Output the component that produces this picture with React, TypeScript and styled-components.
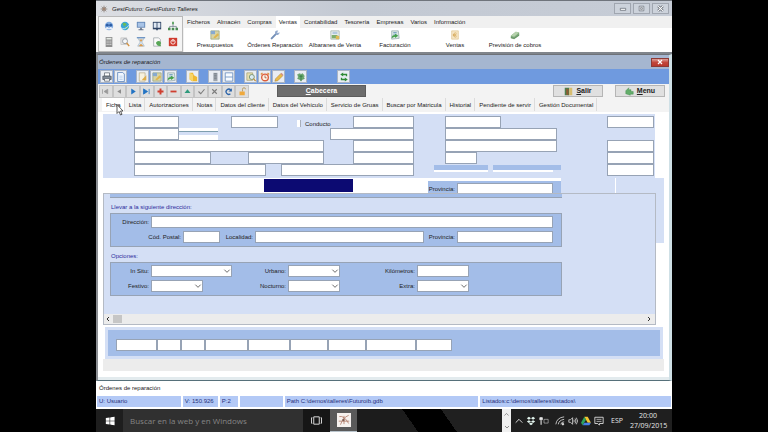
import React from "react";
import styled, { createGlobalStyle, css } from "styled-components";

const SANS = '"Liberation Sans", Arial, sans-serif';
const SHELL = '"Open Sans", "Noto Sans", sans-serif';

const color = {
  pale: "#d4dff5",
  mid: "#a3bde8",
  toolbar: "#6f9adf",
  line: "#97a3b5",
  status: "#b3c9f6",
  navy: "#0c0a72",
  label: "#2c2c9c",
};

const GlobalStyle = createGlobalStyle`
  *, *::before, *::after { box-sizing: border-box; }
  body { margin: 0; background: #000; font-family: ${SANS}; font-size: 6px; line-height: 8px; color: #222; }
  button, input, select { font: inherit; color: inherit; margin: 0; padding: 0; border-radius: 0; }
  svg { display: block; flex: none; }
`;

/* ---------- window ---------- */

const Desktop = styled.div`
  display: flex;
  justify-content: center;
  min-height: 100vh;
  background: #000;
`;
const AppWindow = styled.div`
  display: flex;
  flex-direction: column;
  width: 75%;
  background: #fff;
`;
const TitleBar = styled.header`
  display: flex;
  align-items: center;
  gap: 4px;
  height: 16px;
  padding: 0 3px 0 4px;
  border-top: 1px solid #6f747c;
  background: linear-gradient(90deg, #dcdee3 0%, #c3c9d3 45%, #c6ccd6 100%);
`;
const Title = styled.h1`
  flex: 1;
  margin: 0;
  font-size: 6px;
  font-weight: 400;
  font-style: italic;
`;
const WindowButtons = styled.div`
  display: flex;
  gap: 2px;
`;
const WindowButton = styled.button`
  display: grid;
  place-items: center;
  width: 17px;
  height: 11px;
  border: 1px solid #a0a6b0;
  background: #ccd2db;
  color: #555c66;
`;

/* ---------- ribbon ---------- */

const Ribbon = styled.div`
  display: flex;
  height: 38px;
  padding-left: 2px;
  border-bottom: 2px solid #80858c;
  background: #f0f0f0;
`;
const QuickPanel = styled.div`
  display: grid;
  grid-template-columns: repeat(5, 16px);
  place-content: center;
  width: 85px;
  border: 1px solid #b9b9b9;
  background: #f4f4f4;
`;
const IconButton = styled.button`
  display: grid;
  place-items: center;
  height: 16px;
  border: 0;
  background: none;
`;
const RibbonMain = styled.div`
  display: flex;
  flex: 1;
  flex-direction: column;
  margin-left: 1px;
`;
const Menu = styled.nav`
  display: flex;
  gap: 1px;
  height: 12px;
`;
const MenuTab = styled.button<{ $active?: boolean }>`
  padding: 0 3px;
  border: 0;
  background: ${(p) => (p.$active ? "#fff" : "none")};
  white-space: nowrap;
`;
const RibbonItems = styled.div`
  display: grid;
  grid-template-columns: repeat(6, 60px);
  flex: 1;
  padding-left: 1px;
  background: #fff;
`;
const RibbonItem = styled.button`
  display: flex;
  flex-direction: column;
  align-items: center;
  gap: 1px;
  padding-top: 2px;
  border: 0;
  background: none;
  white-space: nowrap;
`;

/* ---------- child window ---------- */

const Child = styled.section`
  display: flex;
  flex-direction: column;
  border: solid #6e7278;
  border-width: 1px 3px 1px 2px;
  border-left-color: #8b8e93;
  border-right-color: #cfe0e6;
  border-bottom-color: #56707a;
  background: #fff;
`;
const ChildTitle = styled.div`
  display: flex;
  align-items: center;
  justify-content: space-between;
  height: 14px;
  padding-left: 1px;
  background: #a5b6d0;
`;
const ChildHeading = styled.h2`
  margin: 0;
  font-size: 6px;
  font-weight: 400;
  font-style: italic;
`;
const CloseButton = styled.button`
  display: grid;
  place-items: center;
  width: 18px;
  height: 9px;
  border: 1px solid #8d3a35;
  background: linear-gradient(#dda09a, #c2463b 50%, #b8392e);
  color: #fff;
`;
const Toolbar = styled.div`
  display: flex;
  align-items: center;
  gap: 9px;
  height: 15px;
  padding-left: 2px;
  background: ${color.toolbar};
`;
const ToolGroup = styled.div<{ $apart?: boolean }>`
  display: flex;
  gap: 1px;
  margin-left: ${(p) => (p.$apart ? 21 : 0)}px;
`;
const ToolButton = styled.button`
  display: grid;
  place-items: center;
  width: 13px;
  height: 13px;
  border: 1px solid #aab4c4;
  background: #e9edf3;
`;
const NavBar = styled.div`
  display: flex;
  align-items: center;
  height: 14px;
  padding: 0 4px 0 1px;
  background: #f3f3f3;
`;
const NavButtons = styled.div`
  display: grid;
  grid-template-columns: repeat(11, 1fr);
  width: 150px;
`;
const NavButton = styled.button`
  display: grid;
  place-items: center;
  height: 13px;
  border: 1px solid #c4c4c4;
  background: #dedede;
`;
const HeaderButton = styled.button`
  width: 89px;
  height: 12px;
  margin: 0 auto 0 28px;
  border: 1px solid #5c5c5c;
  background: #6d6d6d;
  color: #fff;
  font-size: 7px;
  font-weight: 700;
`;
const ActionButton = styled.button`
  display: flex;
  align-items: center;
  justify-content: center;
  gap: 3px;
  width: 50px;
  height: 12px;
  margin-left: 12px;
  border: 1px solid #b5b5b5;
  background: #e0e0e0;
  font-size: 7px;
  font-weight: 700;
`;
const Tabs = styled.nav`
  display: flex;
  height: 14px;
  padding: 0 0 1px 4px;
  background: #f3f3f3;
`;
const Tab = styled.button<{ $active?: boolean }>`
  position: relative;
  padding: 0 3px 0 4px;
  border: 0;
  border-right: 1px solid #dcdcdc;
  background: ${(p) => (p.$active ? "#fff" : "none")};
  white-space: nowrap;
`;
const Pointer = styled.svg`
  position: absolute;
  z-index: 2;
  top: 6px;
  left: 14px;
`;

/* ---------- form ---------- */

const Body = styled.div`
  display: flex;
  flex-direction: column;
  padding: 2px 5px 6px;
  border-bottom: 3px solid #e3ebee;
`;
const Cells = styled.div<{ $cols: string; $height?: number }>`
  display: grid;
  grid-template-columns: ${(p) =>
    p.$cols
      .split(" ")
      .map((n) => `minmax(0, ${n}fr)`)
      .join(" ")};
  height: ${(p) => (p.$height ? `${p.$height}px` : "auto")};
`;
const UpperPanel = styled.div`
  margin-right: 9px;
  padding: 2px 0;
  background: ${color.pale};
`;
const fieldLook = css`
  width: 100%;
  min-width: 0;
  height: 12px;
  border: 1px solid ${color.line};
  background: #fff;
`;
const Field = styled.input`
  ${fieldLook}
`;
const Check = styled.input`
  appearance: none;
  width: 4px;
  height: 7px;
  margin-top: 4px;
  border: solid #a8afbb;
  border-width: 0 1px 0 0;
  background: #fff;
`;
const CheckLabel = styled.label`
  padding-top: 4px;
`;
const Strips = styled.div`
  display: grid;
  grid-template-rows: 3px 1px 3px 5px;
  height: 12px;
`;
const Strip = styled.div<{ $tone?: "white" | "mid" | "edge" | "pale" }>`
  background: ${(p) =>
    ({ white: "#fff", mid: color.mid, edge: "#7f9fae", pale: color.pale, none: "none" })[p.$tone ?? "none"]};
`;
const RemnantStrips = styled.div`
  display: grid;
  grid-template-rows: 5px 2px;
  padding-top: 1px;
`;
const BandBlock = styled.div`
  display: grid;
  grid-template-columns: minmax(0, 29fr) minmax(0, 96fr) minmax(0, 8fr);
  height: 12px;
  margin-top: 3px;
  padding-top: 2px;
  background: ${color.mid};
`;
const Marker = styled.div`
  height: 13px;
  margin-top: 1px;
  background: ${color.navy};
`;
const ScrollPanel = styled.div`
  border: 1px solid #b4bac4;
  background: ${color.pale};
`;
const TopRemnant = styled.div`
  height: 4px;
  border-bottom: 1px solid ${color.line};
  background: ${color.mid};
`;
const SideStrip = styled.div`
  height: 50px;
  background: ${color.pale};
`;
const GroupTitle = styled.h3`
  margin: 5px 0 2px;
  padding-left: 1px;
  color: ${color.label};
  font-size: 6px;
  font-weight: 400;
  line-height: 8px;
`;
const Group = styled.div`
  display: grid;
  gap: 3px;
  padding: 2px 0 3px;
  border: 1px solid ${color.line};
  background: ${color.mid};
`;
const Label = styled.label`
  padding-right: 2px;
  line-height: 12px;
  text-align: right;
  white-space: nowrap;
`;
const SelectBox = styled.span`
  display: grid;
  align-items: center;
  > * {
    grid-area: 1 / 1;
  }
  > svg {
    justify-self: end;
    margin-right: 1px;
    pointer-events: none;
  }
`;
const Select = styled.select`
  ${fieldLook}
  appearance: none;
`;
const ScrollTrack = styled.div`
  display: flex;
  align-items: center;
  justify-content: space-between;
  height: 10px;
  margin-top: 18px;
  padding: 0 3px 0 1px;
  background: #ececec;
`;
const ScrollStart = styled.div`
  display: flex;
  align-items: center;
  gap: 2px;
`;
const Thumb = styled.div`
  width: 9px;
  height: 8px;
  background: #c6c6c6;
`;
const Totals = styled.div`
  margin: 2px 1px 0 2px;
  padding: 3px;
  background: ${color.pale};
`;
const TotalsInner = styled.div`
  padding: 9px 0 5px;
  background: ${color.mid};
`;
const Filler = styled.div`
  height: 12px;
  background: #ececec;
`;

/* ---------- status bars ---------- */

const HintBar = styled.div`
  height: 14px;
  padding-left: 3px;
  line-height: 14px;
`;
const StatusBar = styled.footer`
  display: grid;
  grid-template-columns: 84fr 35fr 18fr 43fr 194fr 191fr;
  gap: 2px;
  padding: 1px 1px 2px;
`;
const StatusCell = styled.div`
  padding: 0 2px;
  background: ${color.status};
  color: #26307a;
  line-height: 11px;
  white-space: nowrap;
`;
const Taskbar = styled.div`
  display: flex;
  align-items: stretch;
  flex: 1;
  min-height: 23px;
  background: #161616;
  color: #e8e8e8;
  font-family: ${SHELL};
`;
const StartButton = styled.button`
  display: grid;
  place-items: center;
  width: 27px;
  border: 0;
  background: #1e1e1e;
`;
const Search = styled.input`
  width: 180px;
  padding: 0 7px;
  border: 0;
  background: #303030;
  font-size: 8px;
  &::placeholder {
    color: #858585;
    opacity: 1;
  }
`;
const TaskButton = styled.button<{ $active?: boolean }>`
  display: grid;
  place-items: center;
  width: 27px;
  border: 0;
  border-bottom: 1px solid ${(p) => (p.$active ? "#b9c4cc" : "transparent")};
  background: ${(p) => (p.$active ? "#5a5a5a" : "none")};
  color: #e8e8e8;
`;
const Wallpaper = styled.div`
  flex: 1;
  background: linear-gradient(55deg, #1c1c1c 38%, #000 38% 62%, #202020 62%);
`;
const Spinner = styled.div`
  display: flex;
  flex-direction: column;
  align-items: center;
  justify-content: space-between;
  width: 9px;
  padding: 3px 0 2px;
  background: #f0f0f0;
  color: #555;
`;
const Tray = styled.div`
  display: flex;
  align-items: center;
  gap: 3px;
  padding: 0 6px 0 4px;
  background: #1f1f1f;
  font-size: 7px;
`;
const Language = styled.span`
  width: 20px;
  text-align: center;
`;
const Clock = styled.time`
  width: 36px;
  font-size: 7px;
  line-height: 10px;
  text-align: center;
`;

/* ---------- icons ---------- */

const drawings = {
  gear: (
    <g stroke="#8d8078" strokeWidth="1.2" fill="none">
      <path d="M6 1v10M1 6h10M2.500 2.500l7 7M9.500 2.500l-7 7" />
      <circle cx="6" cy="6" r="2" fill="#b58a70" />
    </g>
  ),
  users: (
    <g>
      <circle cx="6" cy="6" r="5" fill="#7fa9de" />
      <circle cx="4" cy="5" r="1.700" fill="#2d5da5" />
      <circle cx="8" cy="5" r="1.700" fill="#2d5da5" />
      <path d="M1 10q3-5 5-1q2-4 5 1z" fill="#e6eefb" />
    </g>
  ),
  globe: (
    <g>
      <circle cx="6" cy="6" r="5" fill="#39a6d8" />
      <path d="M3 3q3-2 5 1l-3 3zM7 7l3 1-3 2z" fill="#6dbb58" />
      <path d="M1 8q4 4 10-3" stroke="#e2f2fa" fill="none" />
    </g>
  ),
  monitor: (
    <g>
      <path d="M1 1h10v7H1z" fill="#5f83b4" />
      <path d="M2 2h8v5H2z" fill="#a8c3e6" />
      <path d="M5 8h2v2H5zM3 10h6v1H3z" fill="#65738a" />
    </g>
  ),
  book: (
    <g>
      <path d="M1 1h10v9H1z" fill="#2f4465" />
      <path d="M2 2h3.500v6H2zM6.500 2H10v6H6.500z" fill="#dfe8f3" />
      <path d="M5 9h2v2H5z" fill="#2f4465" />
    </g>
  ),
  tree: (
    <g>
      <path d="M6 3v4M2 9V6.500h8V9" stroke="#7b8794" fill="none" />
      <path d="M5 1h2v3H5z" fill="#4b9a50" />
      <path d="M0 8h3v3H0zM4.500 8h3v3h-3zM9 8h3v3H9z" fill="#4a8a52" />
    </g>
  ),
  calculator: (
    <g>
      <path d="M2 0h8v12H2z" fill="#8e8e8e" />
      <path d="M3 1h6v2H3z" fill="#e3e9e3" />
      <path d="M3 5h6M3 7h6M3 9h6" stroke="#dedede" strokeDasharray="1.500 .7" />
    </g>
  ),
  lens: (
    <g>
      <path d="M1 1h7v8H1z" fill="#e5e5e5" stroke="#b0b0b0" strokeWidth=".6" />
      <circle cx="6" cy="5" r="3" fill="#f4f6f8" stroke="#8f959c" />
      <path d="M8 7l3 4" stroke="#d29243" strokeWidth="1.800" />
    </g>
  ),
  hourglass: (
    <g>
      <path d="M2 1h8l-3 5 3 5H2l3-5z" fill="#d6e4f0" stroke="#8ba0b5" strokeWidth=".6" />
      <path d="M3 11l3-3 3 3zM4 3h4L6 6z" fill="#db9a4b" />
      <path d="M1 0h10v1.500H1z" fill="#7196c4" />
    </g>
  ),
  pageGreen: (
    <g>
      <path d="M2 1h6l2 2v8H2z" fill="#fafafa" stroke="#8f979f" strokeWidth=".8" />
      <path d="M5 8a3 2.500 0 1 1 5 1l1 2-4-.4z" fill="#58a657" />
    </g>
  ),
  power: (
    <g>
      <path d="M1 1h10v10H1z" fill="#cf3b2e" />
      <circle cx="6" cy="6" r="2.600" fill="none" stroke="#fff" />
      <path d="M6 2.500v3.500" stroke="#fff" />
    </g>
  ),
  noteYellow: (
    <g>
      <path d="M1 1h10v10H1z" fill="#d8d3a5" stroke="#8f9f78" strokeWidth=".8" />
      <path d="M1 1h5v4H1z" fill="#86a9d0" />
      <path d="M4 9l5-5 2 2-5 4z" fill="#e0b64d" />
    </g>
  ),
  wrench: (
    <g>
      <path d="M2 10l5-5" stroke="#7590b8" strokeWidth="2.400" strokeLinecap="round" />
      <path d="M6 2q2-2 4-1L8.500 2.600l1.200 1.200L11.300 2.400Q12 5 9.500 6 6 6.500 6 2z" fill="#91a8cb" />
    </g>
  ),
  pageImage: (
    <g>
      <path d="M1 1h10v10H1z" fill="#eef2f0" stroke="#98a69b" strokeWidth=".8" />
      <path d="M2 6h7v4H2z" fill="#7fae6d" />
      <path d="M3 2h6v3H3z" fill="#b3c9df" />
      <path d="M7 7h4v4H7z" fill="#dfba55" />
    </g>
  ),
  invoice: (
    <g>
      <path d="M2 1h8l1 9-9 1z" fill="#dbe8e4" stroke="#8fa3a8" strokeWidth=".8" />
      <path d="M4 3h4M4 5h4" stroke="#6b97bd" />
      <path d="M2 10q0-4 4-4V4.500L10 7 6 9.500V8Q4 8 2 10z" fill="#46a04c" />
    </g>
  ),
  folderPale: (
    <g>
      <path d="M2 1h8v10H2z" fill="#f6e6c6" stroke="#e0c48e" strokeWidth=".8" />
      <path d="M8 4a2.500 2.500 0 1 0 0 4M3.500 5.500h4M3.500 6.700h4" stroke="#d9ad62" fill="none" />
    </g>
  ),
  money: (
    <g>
      <path d="M1 7l6-5 4 1v4l-6 4-4-1z" fill="#7eaa7b" />
      <path d="M1 7l6-5 4 1-6 5z" fill="#b5d1ac" />
      <path d="M1 9l4 1 6-4" stroke="#557e56" strokeWidth=".6" fill="none" />
    </g>
  ),
  printer: (
    <g>
      <path d="M3 1h6v4H3z" fill="#fff" stroke="#4d5661" strokeWidth=".8" />
      <path d="M1 5h10v4H1z" fill="#848e9a" stroke="#3f4751" strokeWidth=".8" />
      <path d="M3 8h6v3H3z" fill="#fff" stroke="#4d5661" strokeWidth=".8" />
    </g>
  ),
  page: (
    <g>
      <path d="M2 .5h6l2 2v9H2z" fill="#f1f7ff" stroke="#5d84bb" />
      <path d="M4 5h4M4 7h4M4 9h4" stroke="#9dbbe0" strokeWidth=".7" />
    </g>
  ),
  pageGold: (
    <g>
      <path d="M1.500 1h7v10h-7z" fill="#f7f1de" stroke="#b7a780" strokeWidth=".8" />
      <path d="M5 9l5-5v6H5z" fill="#dfad4a" />
    </g>
  ),
  folder: (
    <g>
      <path d="M2 1h4l1 3 4 2v5H5l-3-2z" fill="#f0b92f" />
      <path d="M2 1l4 2v8l-4-2z" fill="#f8d568" />
    </g>
  ),
  column: (
    <g>
      <path d="M4 1h5v10H4z" fill="#9ea5ae" />
      <path d="M5 2h3M5 4h3M5 6h3M5 8h3" stroke="#646c76" strokeWidth=".7" />
    </g>
  ),
  split: <path d="M1.500 1h9v10h-9zM1.500 6h9" fill="#f7fbff" stroke="#6a8fbf" />,
  searchGold: (
    <g>
      <path d="M1 1h7v9H1z" fill="#e6dfb0" stroke="#99915b" strokeWidth=".7" />
      <circle cx="7" cy="6" r="3" fill="#dcebf2" stroke="#6f8b68" />
      <path d="M9 8l2.500 3" stroke="#c58b2d" strokeWidth="1.500" />
    </g>
  ),
  alarm: (
    <g>
      <circle cx="6" cy="6.500" r="4" fill="#fff2e4" stroke="#dd5d3b" strokeWidth="1.600" />
      <path d="M6 4v3h2" stroke="#8a3a28" fill="none" strokeWidth=".8" />
      <path d="M1 3l2-2M11 3L9 1" stroke="#e08b3b" strokeWidth="1.500" />
    </g>
  ),
  pencil: (
    <g>
      <path d="M2 8l6-6 2.500 2.500-6 6L1 11z" fill="#e9ba4a" stroke="#a87a27" strokeWidth=".6" />
      <path d="M8 2l1-1 2.500 2.500-1 1z" fill="#d68d86" />
    </g>
  ),
  leaf: (
    <g>
      <path d="M2 3l3-1 1 1 2-1 2 3-1 1 1 2-3 1-1 2-1-2-3-1 1-2z" fill="#6aab6d" stroke="#5b9560" strokeWidth=".8" />
      <path d="M4 5h4M6 4v6" stroke="#2f7040" strokeWidth=".9" />
    </g>
  ),
  recycle: (
    <g fill="none" stroke="#2f8a35" strokeWidth="1.600">
      <path d="M9 5V3H4.500M3 7v2h4.500" />
      <path d="M5 .5v5L1.500 3zM7 6.500v5L10.500 9z" fill="#2f8a35" stroke="none" />
    </g>
  ),
  first: <path d="M2 3v6M9 3v6L4 6z" fill="#999" stroke="#999" strokeWidth="1" />,
  prev: <path d="M8 3v6L3 6z" fill="#8c8c8c" />,
  next: <path d="M3 2v8l6-4z" fill="#2273c3" />,
  last: <path d="M2 2.500v7L7.500 6zM9.500 2.500v7" fill="#2273c3" stroke="#2273c3" />,
  plus: <path d="M6 2v8M2 6h8" stroke="#cf3f30" strokeWidth="2.600" />,
  minus: <path d="M2 6h8" stroke="#cf3f30" strokeWidth="2.400" />,
  up: <path d="M6 3l4 5H2z" fill="#2f9a7c" />,
  tick: <path d="M2 6l3 3 5-6" stroke="#7c7c7c" strokeWidth="1.500" fill="none" />,
  cross: <path d="M3 3l6 6M9 3l-6 6" stroke="#7c7c7c" strokeWidth="1.500" />,
  refresh: (
    <g>
      <path d="M8.500 9A3.500 3.500 0 1 1 9 4" stroke="#2a62a8" strokeWidth="1.800" fill="none" />
      <path d="M10.500 1.500v4.500H6z" fill="#2a62a8" />
    </g>
  ),
  unlock: (
    <g>
      <path d="M6 6V3q0-2 2-2t2 2" stroke="#b79a5e" fill="none" strokeWidth="1.200" />
      <path d="M2 6h7v5H2z" fill="#efa93c" />
    </g>
  ),
  door: (
    <g>
      <path d="M1 1h6v10H1z" fill="#4d7f4e" />
      <path d="M3 2l3 1v8l-3-1z" fill="#8f5b33" />
      <path d="M7 1h4v10H7z" fill="#d7bd70" />
    </g>
  ),
  menuArrow: <path d="M1 5l4-4v2.500h3V6h3v3.500H7V11L1 9z" fill="#63ad6a" stroke="#3f8549" strokeWidth=".5" />,
  chevron: <path d="M2 4l4 4 4-4" stroke="#555" strokeWidth="1.300" fill="none" />,
  caretUp: <path d="M1 8.500l5-5 5 5" stroke="currentColor" strokeWidth="1.400" fill="none" />,
  left: <path d="M8 2L4 6l4 4" stroke="#333" strokeWidth="2" fill="none" />,
  right: <path d="M4 2l4 4-4 4" stroke="#333" strokeWidth="2" fill="none" />,
  minimize: <path d="M2 5h8v3H2z" stroke="currentColor" fill="#fff" />,
  maximize: <path d="M2 2h8v8H2zM4.500 4.500h3v3h-3z" stroke="currentColor" fill="#eef0f3" />,
  close: <path d="M2 2l8 8M10 2l-8 8" stroke="currentColor" strokeWidth="2.400" />,
  closeOutline: (
    <g>
      <path d="M2 2l8 8M10 2l-8 8" stroke="currentColor" strokeWidth="4" />
      <path d="M2 2l8 8M10 2l-8 8" stroke="#fff" strokeWidth="1.800" />
    </g>
  ),
  windows: (
    <path
      d="M1 2.500l4.500-.7v3.900H1zM6.200 1.700L11.500 1v4.700H6.200zM1 6.400h4.500v3.900L1 9.600zM6.200 6.400h5.300V11l-5.300-.7z"
      fill="#fff"
    />
  ),
  taskView: <path d="M3 2h6v8H3zM1.500 3H.5v6h1M10.500 3h1v6h-1" stroke="currentColor" fill="none" />,
  appTile: (
    <g>
      <path d="M0 0h12v12H0z" fill="#f6f1ee" />
      <path d="M2 3q4-1 8 6M3 10q2-6 7-8M1.500 7h9M6 2.500v7" stroke="#b07a68" strokeWidth=".7" fill="none" />
      <circle cx="5.500" cy="6" r="1" fill="#7c5f55" />
    </g>
  ),
  dropbox: (
    <path
      d="M3.500 1L6 2.700 3.500 4.500 1 2.700zM8.500 1L11 2.700 8.500 4.500 6 2.700zM3.500 5L6 6.700 3.500 8.500 1 6.700zM8.500 5L11 6.700 8.500 8.500 6 6.700zM6 7.700l2.500 1.700L6 11 3.500 9.400z"
      fill="#e3f5ee"
    />
  ),
  battery: (
    <g stroke="#e8e8e8" fill="none">
      <path d="M6 4h5v4.500H6z" strokeOpacity=".6" />
      <path d="M1 2h3v2.500H1z" fill="#e8e8e8" />
      <path d="M2.500 5v5.500" strokeWidth="1.300" />
    </g>
  ),
  wifi: (
    <g stroke="#d8d8d8" fill="none">
      <path d="M1 10Q2 2 11 1M4 10q.5-5 7-6M7 10q.5-3 4-3" />
      <circle cx="9.500" cy="9.800" r="1" fill="#fff" />
    </g>
  ),
  sound: (
    <g stroke="#e8e8e8" fill="none" strokeWidth=".9">
      <path d="M1 4.500h2L5.500 2v8L3 7.500H1z" />
      <path d="M7 4.500q1 1.500 0 3M8.500 3q2 3 0 6M10 2q3 4 0 8" />
    </g>
  ),
  drive: (
    <g>
      <path d="M4 1h4l4 7H8z" fill="#f4c430" />
      <path d="M4 1l2 3.500L2 11 0 8z" fill="#2fa35a" />
      <path d="M4 8h8l-2 3H2z" fill="#4680e4" />
    </g>
  ),
  message: (
    <g stroke="#e8e8e8" fill="none">
      <path d="M1 1.500h10v7.500H6.500V11L4.500 9H1z" />
      <path d="M3 4h6M3 6.500h6" strokeWidth=".8" />
    </g>
  ),
};

type IconName = keyof typeof drawings;

const Icon = ({ name, size = 10 }: { name: IconName; size?: number }) => (
  <svg width={size} height={size} viewBox="0 0 12 12" aria-hidden="true">
    {drawings[name]}
  </svg>
);

/* ---------- data ---------- */

const quick: [IconName, string][] = [
  ["users", "Usuarios"],
  ["globe", "Internet"],
  ["monitor", "Equipo"],
  ["book", "Agenda"],
  ["tree", "Red"],
  ["calculator", "Calculadora"],
  ["lens", "Buscar"],
  ["hourglass", "Pendientes"],
  ["pageGreen", "Documento"],
  ["power", "Apagar"],
];
const menu = ["Ficheros", "Almacén", "Compras", "Ventas", "Contabilidad", "Tesorería", "Empresas", "Varios", "Información"];
const ribbon: [IconName, string][] = [
  ["noteYellow", "Presupuestos"],
  ["wrench", "Órdenes Reparación"],
  ["pageImage", "Albaranes de Venta"],
  ["invoice", "Facturación"],
  ["folderPale", "Ventas"],
  ["money", "Previsión de cobros"],
];
const tools: IconName[][] = [
  ["printer", "page"],
  ["pageGold", "noteYellow", "invoice"],
  ["folder"],
  ["column", "split"],
  ["searchGold", "alarm", "pencil"],
  ["leaf"],
  ["recycle"],
];
const nav: IconName[] = ["first", "prev", "next", "last", "plus", "minus", "up", "tick", "cross", "refresh", "unlock"];
const tabs = [
  "Ficha",
  "Lista",
  "Autorizaciones",
  "Notas",
  "Datos del cliente",
  "Datos del Vehículo",
  "Servicio de Gruas",
  "Buscar por Matricula",
  "Historial",
  "Pendiente de servir",
  "Gestión Documental",
];
const status = ["U: Usuario", "V: 150.926", "P:2", "", "Path C:\\demos\\talleres\\Futuroib.gdb", "Listados:c:\\demos\\talleres\\listados\\"];
const totals = ["Bruto", "Dto", "Base", "Base imponible", "IVA", "Cuota", "Recargo", "Total", "Pendiente"];

/* ---------- parts ---------- */

const LabeledField = ({ id, text }: { id: string; text: string }) => (
  <>
    <Label htmlFor={id}>{text}</Label>
    <Field id={id} />
  </>
);

const LabeledSelect = ({ id, text }: { id: string; text: string }) => (
  <>
    <Label htmlFor={id}>{text}</Label>
    <SelectBox>
      <Select id={id} />
      <Icon name="chevron" size={8} />
    </SelectBox>
  </>
);

const Gap = () => <span />;

const UpperForm = () => (
  <UpperPanel>
    <Cells $cols="31 45 52 47 19 8 30 18 61 31 56 106 47 1" $height={12}>
      <Gap />
      <Field aria-label="Número" />
      <Gap />
      <Field aria-label="Fecha" />
      <Gap />
      <Check type="checkbox" id="conductor" />
      <CheckLabel htmlFor="conductor">Conducto</CheckLabel>
      <Gap />
      <Field aria-label="Conductor" />
      <Gap />
      <Field aria-label="Matrícula" />
      <Gap />
      <Field aria-label="Entrada" />
    </Cells>
    <Cells $cols="31 45 39 112 84 31 112 98" $height={12}>
      <Gap />
      <Field aria-label="Cliente" />
      <Strips>
        <Strip $tone="white" />
        <Strip $tone="edge" />
        <Strip />
        <Strip $tone="white" />
      </Strips>
      <Gap />
      <Field aria-label="Nombre" />
      <Gap />
      <Field aria-label="Marca" />
    </Cells>
    <Cells $cols="31 190 29 61 31 112 50 47 1" $height={12}>
      <Gap />
      <Field aria-label="Domicilio" />
      <Gap />
      <Field aria-label="Código" />
      <Gap />
      <Field aria-label="Modelo" />
      <Gap />
      <Field aria-label="Salida" />
    </Cells>
    <Cells $cols="31 77 37 76 29 61 31 32 130 47 1" $height={12}>
      <Gap />
      <Field aria-label="Población" />
      <Gap />
      <Field aria-label="Comarca" />
      <Gap />
      <Field aria-label="Teléfono" />
      <Gap />
      <Field aria-label="Color" />
      <Gap />
      <Field aria-label="Kilometraje" />
    </Cells>
    <Cells $cols="31 132 15 133 20 54 5 60 8 46 47 1" $height={12}>
      <Gap />
      <Field aria-label="Correo" />
      <Gap />
      <Field aria-label="Contacto" />
      <Gap />
      <RemnantStrips>
        <Strip $tone="mid" />
        <Strip $tone="white" />
      </RemnantStrips>
      <Gap />
      <RemnantStrips>
        <Strip $tone="mid" />
        <Strip $tone="white" />
      </RemnantStrips>
      <RemnantStrips>
        <Strip $tone="mid" />
      </RemnantStrips>
      <Gap />
      <Field aria-label="Depósito" />
    </Cells>
  </UpperPanel>
);

const MiddleBand = () => (
  <Cells $cols="161 89 75 133 54 1 48" $height={15}>
    <Gap />
    <Marker />
    <Gap />
    <BandBlock>
      <LabeledField id="provincia-1" text="Provincia:" />
    </BandBlock>
    <Strip $tone="pale" />
    <Gap />
    <Strip $tone="pale" />
  </Cells>
);

const DetailForm = () => (
  <ScrollPanel>
    <Cells $cols="6 452 93">
      <Gap />
      <div>
        <TopRemnant />
        <GroupTitle>Llevar a la siguiente dirección:</GroupTitle>
        <Group>
          <Cells $cols="40 402 8">
            <LabeledField id="direccion" text="Dirección:" />
          </Cells>
          <Cells $cols="72 37 35 169 33 96 8">
            <LabeledField id="postal" text="Cód. Postal:" />
            <LabeledField id="localidad" text="Localidad:" />
            <LabeledField id="provincia-2" text="Provincia:" />
          </Cells>
        </Group>
        <GroupTitle>Opciones:</GroupTitle>
        <Group>
          <Cells $cols="40 81 56 52 77 52 92">
            <LabeledSelect id="insitu" text="In Situ:" />
            <LabeledSelect id="urbano" text="Urbano:" />
            <LabeledField id="kilometros" text="Kilómetros:" />
          </Cells>
          <Cells $cols="40 52 85 52 77 52 92">
            <LabeledSelect id="festivo" text="Festivo:" />
            <LabeledSelect id="nocturno" text="Nocturno:" />
            <LabeledSelect id="extra" text="Extra:" />
          </Cells>
        </Group>
      </div>
    </Cells>
    <ScrollTrack>
      <ScrollStart>
        <Icon name="left" size={6} />
        <Thumb />
      </ScrollStart>
      <Icon name="right" size={6} />
    </ScrollTrack>
  </ScrollPanel>
);

export default function App() {
  return (
    <Desktop>
      <GlobalStyle />
      <AppWindow>
        <TitleBar>
          <Icon name="gear" size={8} />
          <Title>GestFuturo: GestFuturo Talleres</Title>
          <WindowButtons>
            <WindowButton aria-label="Minimizar">
              <Icon name="minimize" size={8} />
            </WindowButton>
            <WindowButton aria-label="Maximizar">
              <Icon name="maximize" size={7} />
            </WindowButton>
            <WindowButton aria-label="Cerrar">
              <Icon name="closeOutline" size={7} />
            </WindowButton>
          </WindowButtons>
        </TitleBar>
        <Ribbon>
          <QuickPanel>
            {quick.map(([icon, name]) => (
              <IconButton key={name} aria-label={name}>
                <Icon name={icon} />
              </IconButton>
            ))}
          </QuickPanel>
          <RibbonMain>
            <Menu>
              {menu.map((m) => (
                <MenuTab key={m} $active={m === "Ventas"}>
                  {m}
                </MenuTab>
              ))}
            </Menu>
            <RibbonItems>
              {ribbon.map(([icon, name]) => (
                <RibbonItem key={name}>
                  <Icon name={icon} />
                  {name}
                </RibbonItem>
              ))}
            </RibbonItems>
          </RibbonMain>
        </Ribbon>

        <Child>
          <ChildTitle>
            <ChildHeading>Órdenes de reparación</ChildHeading>
            <CloseButton aria-label="Cerrar ventana">
              <Icon name="close" size={6} />
            </CloseButton>
          </ChildTitle>
          <Toolbar>
            {tools.map((group, i) => (
              <ToolGroup key={i} $apart={i === tools.length - 1}>
                {group.map((name) => (
                  <ToolButton key={name} aria-label={name}>
                    <Icon name={name} />
                  </ToolButton>
                ))}
              </ToolGroup>
            ))}
          </Toolbar>
          <NavBar>
            <NavButtons>
              {nav.map((name) => (
                <NavButton key={name} aria-label={name}>
                  <Icon name={name} size={9} />
                </NavButton>
              ))}
            </NavButtons>
            <HeaderButton>
              <u>C</u>abecera
            </HeaderButton>
            <ActionButton>
              <Icon name="door" size={9} />
              <span>
                <u>S</u>alir
              </span>
            </ActionButton>
            <ActionButton>
              <Icon name="menuArrow" size={9} />
              <span>
                <u>M</u>enu
              </span>
            </ActionButton>
          </NavBar>
          <Tabs>
            {tabs.map((t, i) => (
              <Tab key={t} $active={i === 0}>
                {t}
                {i === 0 && (
                  <Pointer width="8" height="12" viewBox="0 0 8 12" aria-hidden="true">
                    <path d="M1 .5v9l2-2 1.500 3.500 1.500-.7L4.500 7H7z" fill="#fff" stroke="#333" strokeWidth=".8" />
                  </Pointer>
                )}
              </Tab>
            ))}
          </Tabs>
          <Body>
            <UpperForm />
            <MiddleBand />
            <Cells $cols="553 8">
              <DetailForm />
              <SideStrip />
            </Cells>
            <Totals>
              <TotalsInner>
                <Cells $cols="8 41 24 24 42 42 38 38 50 36 207">
                  <Gap />
                  {totals.map((name) => (
                    <Field key={name} aria-label={name} />
                  ))}
                </Cells>
              </TotalsInner>
            </Totals>
            <Filler />
          </Body>
        </Child>

        <HintBar>Órdenes de reparación</HintBar>
        <StatusBar>
          {status.map((s, i) => (
            <StatusCell key={i}>{s}</StatusCell>
          ))}
        </StatusBar>

        <Taskbar>
          <StartButton aria-label="Inicio">
            <Icon name="windows" />
          </StartButton>
          <Search aria-label="Buscar" placeholder="Buscar en la web y en Windows" />
          <TaskButton aria-label="Vista de tareas">
            <Icon name="taskView" size={11} />
          </TaskButton>
          <TaskButton $active aria-label="GestFuturo">
            <Icon name="appTile" size={14} />
          </TaskButton>
          <Wallpaper />
          <Spinner>
            <Icon name="caretUp" size={5} />
            <Icon name="chevron" size={6} />
          </Spinner>
          <Tray>
            <Icon name="caretUp" size={8} />
            <Icon name="dropbox" />
            <Icon name="battery" />
            <Gap />
            <Icon name="wifi" />
            <Icon name="sound" />
            <Icon name="drive" />
            <Icon name="message" />
            <Language>ESP</Language>
            <Clock>
              20:00
              <br />
              27/09/2015
            </Clock>
          </Tray>
        </Taskbar>
      </AppWindow>
    </Desktop>
  );
}
